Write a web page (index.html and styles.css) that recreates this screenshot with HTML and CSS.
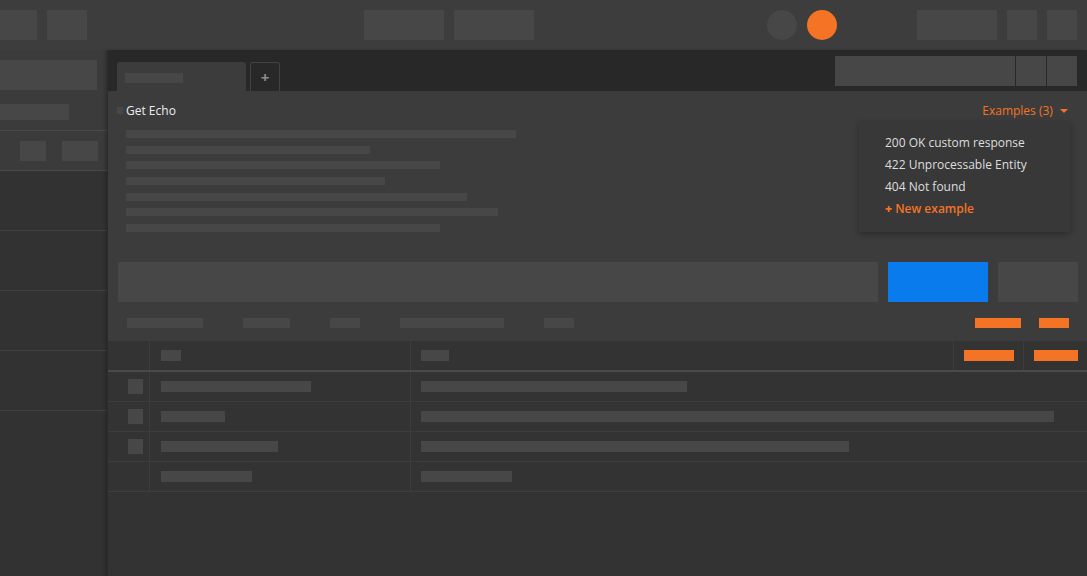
FILE: index.html
```html
<!DOCTYPE html>
<html lang="en">
<head>
    <meta charset="UTF-8">
    <title>Get Echo</title>
    <link rel="stylesheet" href="styles.css">
</head>
<body>
    <div class="topbar">
        <div class="group">
            <span class="ph ph-edge"></span>
            <span class="ph ph-40"></span>
        </div>
        <div class="group group-center">
            <span class="ph ph-80"></span>
            <span class="ph ph-80"></span>
        </div>
        <div class="group group-dots">
            <span class="dot"></span>
            <span class="dot dot-orange"></span>
        </div>
        <div class="group group-right">
            <span class="ph ph-80"></span>
            <span class="ph ph-30"></span>
            <span class="ph ph-30"></span>
        </div>
    </div>

    <div class="workspace">
        <div class="sidebar">
            <div class="side-top">
                <span class="bar side-search"></span>
                <span class="bar side-label"></span>
            </div>
            <div class="side-tools">
                <span class="bar side-btn-a"></span>
                <span class="bar side-btn-b"></span>
            </div>
            <div class="side-row"></div>
            <div class="side-row"></div>
            <div class="side-row"></div>
            <div class="side-row"></div>
        </div>

        <div class="panel">
            <div class="tabbar">
                <div class="tab"><span class="bar tab-title"></span></div>
                <div class="tab-add">+</div>
                <div class="tab-tools">
                    <span class="bar env-select"></span>
                    <span class="bar env-btn"></span>
                    <span class="bar env-btn"></span>
                </div>
            </div>

            <div class="request-info">
                <div class="title-row">
                    <span class="title-mark"></span>
                    <span class="title">Get Echo</span>
                    <span class="examples">Examples (3) <i class="caret"></i></span>
                </div>
                <div class="desc">
                    <span class="line" style="width: 390px"></span>
                    <span class="line" style="width: 244px"></span>
                    <span class="line" style="width: 314px"></span>
                    <span class="line" style="width: 259px"></span>
                    <span class="line" style="width: 341px"></span>
                    <span class="line" style="width: 372px"></span>
                    <span class="line" style="width: 314px"></span>
                </div>

                <div class="dropdown">
                    <div class="dropdown-item">200 OK custom response</div>
                    <div class="dropdown-item">422 Unprocessable Entity</div>
                    <div class="dropdown-item">404 Not found</div>
                    <div class="dropdown-item new"><b>+</b> New example</div>
                </div>
            </div>

            <div class="request-bar">
                <div class="url-row">
                    <span class="url-input"></span>
                    <span class="send-btn"></span>
                    <span class="save-btn"></span>
                </div>
                <div class="subtabs">
                    <span class="bar" style="width: 76px"></span>
                    <span class="bar" style="width: 47px"></span>
                    <span class="bar" style="width: 30px"></span>
                    <span class="bar" style="width: 104px"></span>
                    <span class="bar" style="width: 30px"></span>
                    <span class="spacer"></span>
                    <span class="bar orange" style="width: 46px"></span>
                    <span class="bar orange" style="width: 30px"></span>
                </div>
            </div>

            <div class="params">
                <div class="params-head">
                    <div class="cell"></div>
                    <div class="cell"><span class="bar cell-bar" style="width: 20px"></span></div>
                    <div class="cell"><span class="bar cell-bar" style="width: 28px"></span></div>
                    <div class="cell"><span class="bar orange cell-bar" style="width: 50px"></span></div>
                    <div class="cell"><span class="bar orange cell-bar" style="width: 44px"></span></div>
                </div>
                <div class="params-row">
                    <div class="cell"><span class="check"></span></div>
                    <div class="cell"><span class="bar cell-bar" style="width: 150px"></span></div>
                    <div class="cell"><span class="bar cell-bar" style="width: 266px"></span></div>
                </div>
                <div class="params-row">
                    <div class="cell"><span class="check"></span></div>
                    <div class="cell"><span class="bar cell-bar" style="width: 64px"></span></div>
                    <div class="cell"><span class="bar cell-bar" style="width: 633px"></span></div>
                </div>
                <div class="params-row">
                    <div class="cell"><span class="check"></span></div>
                    <div class="cell"><span class="bar cell-bar" style="width: 117px"></span></div>
                    <div class="cell"><span class="bar cell-bar" style="width: 428px"></span></div>
                </div>
                <div class="params-row">
                    <div class="cell"></div>
                    <div class="cell"><span class="bar cell-bar" style="width: 91px"></span></div>
                    <div class="cell"><span class="bar cell-bar" style="width: 91px"></span></div>
                </div>
            </div>
        </div>
    </div>
</body>
</html>
```

FILE: styles.css
```css
* {
    box-sizing: border-box;
}
body {
    margin: 0;
    width: 1087px;
    height: 576px;
    overflow: hidden;
    background-color: #333333;
    font-family: "Open Sans", "Liberation Sans", sans-serif;
    font-size: 12px;
    color: #e4e4e4;
}
.bar, .ph, .line {
    display: block;
    background-color: #474747;
}
.orange {
    background-color: #f47324;
}

/* top bar */
.topbar {
    height: 50px;
    background-color: #3d3d3d;
    display: flex;
    align-items: center;
}
.group {
    display: flex;
    gap: 10px;
}
.group-center {
    margin-left: 277px;
}
.group-dots {
    margin-left: 233px;
}
.group-right {
    margin-left: 80px;
}
.ph {
    height: 30px;
}
.ph-edge {
    width: 37px;
}
.ph-40 {
    width: 40px;
}
.ph-80 {
    width: 80px;
}
.ph-30 {
    width: 30px;
}
.dot {
    width: 30px;
    height: 30px;
    border-radius: 50%;
    background-color: #474747;
}
.dot-orange {
    background-color: #f47324;
}

.workspace {
    display: flex;
    height: 526px;
}

/* sidebar */
.sidebar {
    width: 107px;
    flex-shrink: 0;
    background-color: #323232;
}
.side-top {
    background-color: #3b3b3b;
    padding: 10px 10px 10px 0;
    height: 81px;
    border-bottom: 1px solid #494949;
}
.side-search {
    height: 30px;
    width: 97px;
}
.side-label {
    height: 16px;
    width: 69px;
    margin-top: 14px;
}
.side-tools {
    background-color: #3b3b3b;
    height: 40px;
    display: flex;
    align-items: center;
    padding-left: 20px;
    gap: 16px;
    border-bottom: 1px solid #494949;
}
.side-btn-a {
    width: 26px;
    height: 20px;
}
.side-btn-b {
    width: 36px;
    height: 20px;
}
.side-row {
    height: 60px;
    border-bottom: 1px solid #404040;
}

/* main panel */
.panel {
    flex: 1;
    background-color: #333333;
    border-left: 1px solid #2b2b2b;
    box-shadow: -2px 0 3px rgba(0, 0, 0, 0.2);
    display: flex;
    flex-direction: column;
}
.tabbar {
    height: 41px;
    background-color: #282828;
    display: flex;
    align-items: flex-end;
    padding-left: 9px;
}
.tab {
    width: 129px;
    height: 29px;
    background-color: #3c3c3c;
    border-radius: 3px 3px 0 0;
    padding: 11px 0 0 8px;
}
.tab-title {
    width: 58px;
    height: 10px;
}
.tab-add {
    width: 30px;
    height: 29px;
    margin-left: 4px;
    border: 1px solid #424242;
    border-bottom: none;
    border-radius: 3px 3px 0 0;
    color: #8c8c8c;
    font-size: 15px;
    font-weight: bold;
    text-align: center;
    line-height: 28px;
}
.tab-tools {
    margin-left: auto;
    margin-right: 10px;
    align-self: center;
    display: flex;
    gap: 1px;
}
.env-select {
    width: 180px;
    height: 30px;
}
.env-btn {
    width: 30px;
    height: 30px;
}

.request-info {
    position: relative;
    background-color: #3c3c3c;
    height: 159px;
    padding: 11px 19px 0 9px;
}
.title-row {
    display: flex;
    align-items: center;
    height: 16px;
}
.title-mark {
    width: 6px;
    height: 7px;
    background-color: #474747;
    margin-right: 3px;
}
.title {
    color: #ececec;
}
.examples {
    margin-left: auto;
    color: #f47324;
}
.caret {
    display: inline-block;
    width: 0;
    height: 0;
    margin-left: 4px;
    vertical-align: middle;
    border-left: 4px solid transparent;
    border-right: 4px solid transparent;
    border-top: 4px solid #f47324;
}
.desc {
    margin: 12px 0 0 9px;
    display: flex;
    flex-direction: column;
    gap: 7.67px;
}
.line {
    height: 8px;
}
.dropdown {
    position: absolute;
    top: 31px;
    right: 17px;
    width: 211px;
    height: 110px;
    background-color: #383838;
    box-shadow: 0 2px 6px rgba(0, 0, 0, 0.3);
    padding: 10px 0 0 26px;
}
.dropdown-item {
    line-height: 22px;
    color: #dedede;
}
.dropdown-item.new {
    color: #f47324;
    font-weight: 600;
}

.request-bar {
    background-color: #3c3c3c;
    height: 91px;
    padding: 12px 9px 0 10px;
}
.url-row {
    display: flex;
    gap: 10px;
    height: 40px;
}
.url-input {
    flex: 1;
    background-color: #474747;
}
.send-btn {
    width: 100px;
    background-color: #097bed;
}
.save-btn {
    width: 80px;
    background-color: #474747;
}
.subtabs {
    display: flex;
    gap: 40px;
    margin: 16px 9px 0 9px;
}
.subtabs .bar {
    height: 10px;
}
.subtabs .spacer {
    flex: 1;
}
.subtabs .orange + .orange {
    margin-left: -22px;
}

/* params table */
.params {
    flex: 1;
    background-color: #333333;
}
.params-head, .params-row {
    display: grid;
    grid-template-columns: 42px 261px 1fr;
}
.params-head {
    grid-template-columns: 42px 261px 1fr 70px 63px;
    height: 31px;
    border-bottom: 2px solid #4a4a4a;
}
.params-row {
    height: 30px;
    border-bottom: 1px solid #3d3d3d;
}
.cell {
    display: flex;
    align-items: center;
    padding-left: 10px;
    border-right: 1px solid #3d3d3d;
}
.cell:first-child {
    padding-left: 20px;
}
.cell:nth-child(2) {
    padding-left: 11px;
}
.cell:last-child {
    border-right: none;
}
.cell-bar {
    height: 11px;
}
.check {
    width: 15px;
    height: 15px;
    background-color: #474747;
}
```
